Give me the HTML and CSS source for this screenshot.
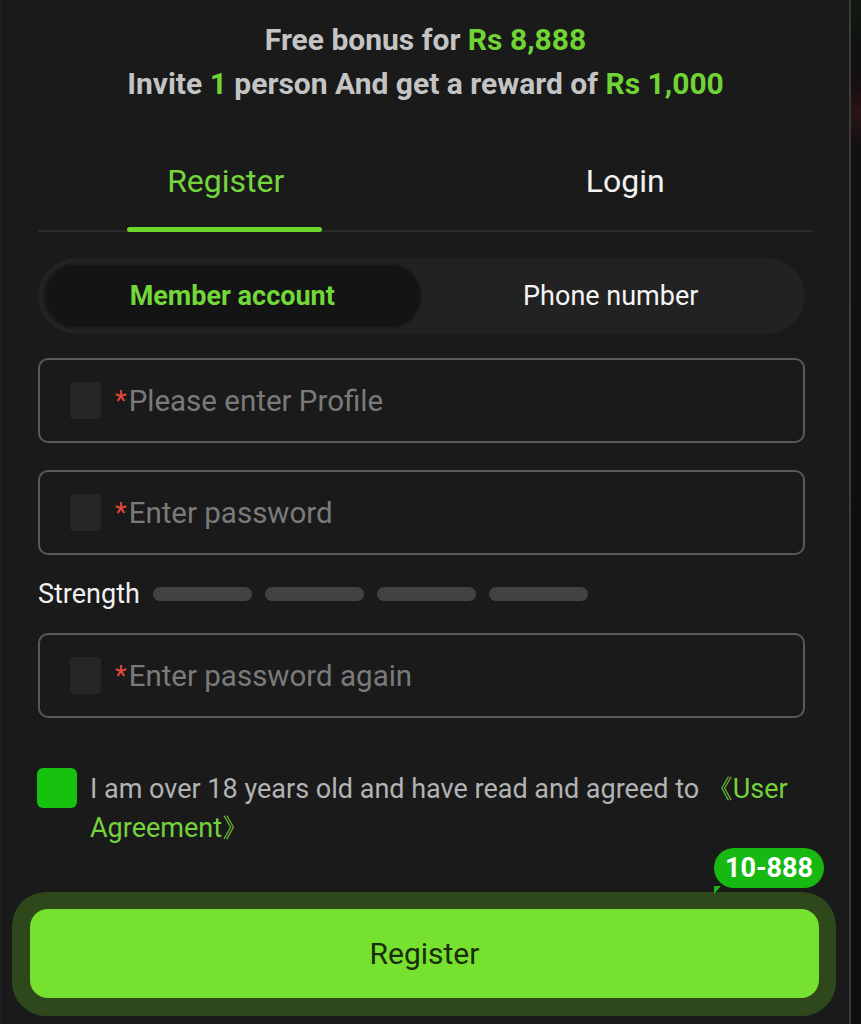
FILE: index.html
```html
<!DOCTYPE html>
<html lang="en">
<head>
<meta charset="utf-8">
<title>Register</title>
<link rel="stylesheet" href="styles.css">
</head>
<body>
<div class="app">
  <main class="main">
    <header class="promo">
      <p class="promo-line">Free bonus for <span class="hl">Rs 8,888</span></p>
      <p class="promo-line">Invite <span class="hl">1</span> person And get a reward of <span class="hl">Rs 1,000</span></p>
    </header>

    <div class="tabs-wrap">
      <nav class="tabs">
        <div class="tab active">Register</div>
        <div class="tab">Login</div>
      </nav>
    </div>

    <div class="segment">
      <div class="seg-item active">Member account</div>
      <div class="seg-item">Phone number</div>
    </div>

    <div class="field">
      <span class="field-icon"></span>
      <span class="req">*</span><span class="ph">Please enter Profile</span>
    </div>

    <div class="field gap-27">
      <span class="field-icon"></span>
      <span class="req">*</span><span class="ph">Enter password</span>
    </div>

    <div class="strength">
      <span class="strength-label">Strength</span>
      <span class="bar"></span><span class="bar"></span><span class="bar"></span><span class="bar"></span>
    </div>

    <div class="field gap-24">
      <span class="field-icon"></span>
      <span class="req">*</span><span class="ph">Enter password again</span>
    </div>

    <div class="agree">
      <span class="check"></span>
      <p class="agree-text">I am over 18 years old and have read and agreed to <span class="link">《User Agreement》</span></p>
    </div>

    <div class="submit-wrap">
      <span class="badge">10-888</span>
      <button class="submit">Register</button>
    </div>
  </main>
  <aside class="rail"></aside>
</div>
</body>
</html>
```

FILE: styles.css
```css
* { box-sizing: border-box; }
html, body { margin: 0; padding: 0; }
body {
  width: 861px;
  height: 1024px;
  overflow: hidden;
  background: #1a1a1a;
  font-family: Roboto, "Liberation Sans", Arial, sans-serif;
  color: #e6e6e6;
}
.app { display: flex; height: 1024px; }
.main {
  width: 849px;
  padding: 18px 36px 0 36px;
  display: flex;
  flex-direction: column;
  border-left: 2px solid #1f1f1f;
}
.rail {
  width: 12px;
  border-left: 2px solid #3a3a3a;
  background: linear-gradient(180deg, #0f1a0f 0px, #101010 60px, #1a0f10 90px, #2a1416 110px, #101010 150px, #0e0e0e 100%);
}

.promo { text-align: center; }
.promo-line {
  margin: 0;
  font-size: 30px;
  line-height: 44px;
  font-weight: 700;
  color: #c4c4c4;
}
.hl { color: #6fd434; }

.tabs-wrap {
  margin-top: 24px;
  border-bottom: 2px solid #2a2a2a;
}
.tabs {
  display: grid;
  grid-template-columns: 1fr 1fr;
  margin: 0 -12px;
}
.tab {
  position: relative;
  text-align: center;
  font-size: 32px;
  line-height: 40px;
  padding: 31px 0 29px;
  color: #f2f2f2;
}
.tab.active { color: #74d63c; }
.tab.active::after {
  content: "";
  position: absolute;
  left: 50%;
  bottom: -2px;
  width: 195px;
  margin-left: -99px;
  height: 5px;
  border-radius: 3px;
  background: #6cd62c;
}

.segment {
  margin: 26px 8px 0 0;
  height: 76px;
  padding: 5px;
  border-radius: 38px;
  background: #222222;
  display: grid;
  grid-template-columns: 1fr 1fr;
}
.seg-item {
  display: flex;
  align-items: center;
  justify-content: center;
  font-size: 27px;
  color: #f4f4f4;
  border-radius: 33px;
}
.seg-item.active {
  background: #141414;
  color: #72d83a;
  font-weight: 700;
  box-shadow: inset 0 0 0 2px #1c1c1c;
}

.field {
  margin: 24px 8px 0 0;
  height: 85px;
  border: 2px solid #595959;
  border-radius: 10px;
  display: flex;
  align-items: center;
  padding-left: 30px;
  font-size: 29.5px;
}
.field.gap-27 { margin-top: 27px; }
.field.gap-24 { margin-top: 24px; }
.field-icon {
  width: 31px;
  height: 37px;
  border-radius: 4px;
  background: #262626;
  margin-right: 14px;
}
.req { color: #e5483c; font-size: 27px; margin-right: 2px; }
.ph { color: #7a7a7a; }

.strength {
  margin-top: 24px;
  height: 30px;
  display: flex;
  align-items: center;
  gap: 13px;
}
.strength-label {
  font-size: 27px;
  color: #f0f0f0;
}
.bar {
  width: 99px;
  height: 14px;
  border-radius: 7px;
  background: #424242;
}

.agree {
  margin-top: 50px;
  display: flex;
  align-items: flex-start;
  gap: 13px;
}
.check {
  flex: none;
  width: 40px;
  height: 40px;
  margin-left: -1px;
  border-radius: 6px;
  background: #17c20f;
}
.agree-text {
  margin: 2px 0 0;
  font-size: 27px;
  line-height: 39px;
  color: #b3b3b3;
}
.link { color: #74d23a; }

.submit-wrap {
  position: relative;
  margin: 44px -23px 0 -26px;
  padding: 17px 17px 18px 18px;
  border-radius: 34px;
  background: #2e481c;
}
.submit {
  display: block;
  width: 100%;
  height: 89px;
  border: 0;
  border-radius: 18px;
  background: #77e12f;
  color: #1a2d0d;
  font-family: Roboto, "Liberation Sans", Arial, sans-serif;
  font-size: 30px;
}
.badge {
  position: absolute;
  top: -44px;
  right: 12px;
  height: 40px;
  padding: 0 11px;
  border-radius: 20px;
  background: #18b812;
  color: #ffffff;
  font-size: 27px;
  font-weight: 700;
  line-height: 40px;
}
.badge::after {
  content: "";
  position: absolute;
  left: 0;
  bottom: -6px;
  border-left: 7px solid #18b812;
  border-bottom: 8px solid transparent;
}
```
